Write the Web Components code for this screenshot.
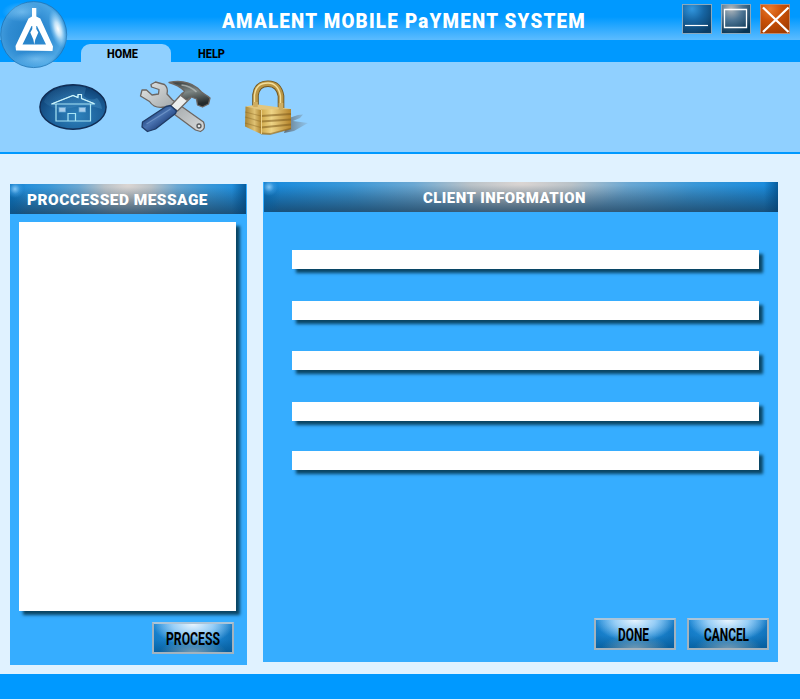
<!DOCTYPE html>
<html lang="en"><head><meta charset="utf-8"><title>Amalent Mobile Payment System</title>
<style>
html,body{margin:0;padding:0}
body{width:800px;height:700px;overflow:hidden;background:#e0f2ff;font-family:Roboto,"Liberation Sans",sans-serif}
</style></head><body>
<payment-app></payment-app>
<script>
const define=(name,html,after)=>{
  const t=document.createElement('template');t.innerHTML=html;
  customElements.define(name,class extends HTMLElement{
    connectedCallback(){
      if(this.shadowRoot)return;
      this.attachShadow({mode:'open'}).append(t.content.cloneNode(true));
      if(after)after(this,this.shadowRoot);
    }
  });
};

/* One line of lettering fitted to an exact width. */
define('fit-text',`<style>:host{display:block;flex:none}svg{display:block;overflow:visible}text{font-family:Roboto,"Liberation Sans",sans-serif}</style><svg><text lengthAdjust="spacingAndGlyphs"></text></svg>`,(h,r)=>{
  const s=r.querySelector('svg'),t=r.querySelector('text'),w=h.getAttribute('w'),c=+h.getAttribute('cap');
  s.setAttribute('width',w);s.setAttribute('height',c);
  t.setAttribute('y',c);t.setAttribute('textLength',w);t.setAttribute('fill',h.getAttribute('color')||'#fff');
  t.style.fontSize=(c/.711)+'px';t.style.fontWeight=h.getAttribute('weight')||'800';
  t.style.letterSpacing=(h.getAttribute('track')||0)+'px';
  t.textContent=h.getAttribute('label');
});

define('app-logo',`<style>:host{display:block;position:absolute;left:0;top:0}svg{display:block}</style>
<svg width="70" height="70" viewBox="0 0 70 70">
<defs><radialGradient id="b" cx=".42" cy=".5" r=".6"><stop offset="0" stop-color="#2380c6"/><stop offset=".5" stop-color="#308cd2"/><stop offset=".85" stop-color="#4ba5e3"/><stop offset="1" stop-color="#2588ce"/></radialGradient>
<radialGradient id="h"><stop offset="0" stop-color="#fff"/><stop offset=".35" stop-color="#e4f5ff" stop-opacity=".8"/><stop offset="1" stop-color="#8fd2ff" stop-opacity="0"/></radialGradient>
<radialGradient id="l"><stop offset="0" stop-color="#8fd0fa" stop-opacity=".6"/><stop offset="1" stop-color="#8fd0fa" stop-opacity="0"/></radialGradient></defs>
<circle cx="33.7" cy="34.6" r="33" fill="url(#b)" stroke="#2074b4" stroke-width=".8"/>
<ellipse cx="22" cy="12" rx="20" ry="10" fill="url(#l)"/>
<ellipse cx="58" cy="29" rx="8" ry="20" fill="url(#h)" transform="rotate(-16 58 29)"/>
<ellipse cx="36" cy="59" rx="22" ry="8" fill="url(#l)"/>
<path fill="#fff" fill-rule="evenodd" d="M32 8h4.300v8.500l4 2L53 46.500 52.500 51 16 50.500 15.500 46 28.500 18.500 32 16.500ZM31.500 26 22.500 44.500H46L37 26Z"/>
<path fill="#fff" d="M32.300 17h4v12l2 3.500-3 7-1 5-1-5-3-7 2-3.500Z"/>
</svg>`);

define('window-button',`<style>:host{display:block;width:30px;height:30px}svg{display:block}</style>
<svg width="30" height="30" viewBox="0 0 30 30"><defs><radialGradient id="g" cx=".33" cy=".15" r=".9"></radialGradient></defs><rect x=".5" y=".5" width="29" height="29" fill="url(#g)"/><g fill="none" stroke="#fff"></g></svg>`,(h,r)=>{
  const k=h.getAttribute('kind');
  const m={
    min:['#3297df','#1766a4','#0a3d66','M3 21.500H26','#8ba9bd',1.2],
    max:['#b2b8bc','#4d7493','#083453','M3.500 5.500H25.500V23.500H3.500Z','#8ba9bd',1.3],
    close:['#e87a2c','#cb5108','#a43d00','M3 3.500 28.500 28M28.500 3.500 3 28','#bb8a70',2.3]}[k];
  r.querySelector('radialGradient').innerHTML=`<stop offset="0" stop-color="${m[0]}"/><stop offset=".45" stop-color="${m[1]}"/><stop offset="1" stop-color="${m[2]}"/>`;
  r.querySelector('rect').setAttribute('stroke',m[4]);
  r.querySelector('g').innerHTML=`<path d="${m[3]}" stroke-width="${m[5]}"/>`;
});

define('title-bar',`<style>:host{display:flex;box-sizing:border-box;height:40px;padding:4px 10px 0 222px;justify-content:space-between;background:linear-gradient(#09f 0,#09f 17px,#31abff 29px,#5cbcff 40px)}
.t{padding-top:10px}.b{display:flex;gap:9px}</style>
<div class="t"><fit-text label="AMALENT MOBILE PaYMENT SYSTEM" w="364" cap="14" track="1.3" weight="900"></fit-text></div>
<div class="b"><window-button kind="min"></window-button><window-button kind="max"></window-button><window-button kind="close"></window-button></div>`);

define('tab-strip',`<style>:host{display:flex;box-sizing:border-box;height:22px;padding:4px 0 0 81px;background:#09f}
div{box-sizing:border-box;height:18px;padding:5px 0 0 26px}div+div{padding-left:27px}.on{width:90px;background:#90d0ff;border-radius:9px 9px 0 0}</style>
<div class="on"><fit-text label="HOME" w="31" cap="9.2" color="#000"></fit-text></div><div><fit-text label="HELP" w="27" cap="9.2" color="#000"></fit-text></div>`);

define('home-icon',`<style>:host{display:block}svg{display:block}</style>
<svg width="68" height="46" viewBox="0 0 68 46"><defs><radialGradient id="a" cx=".55" cy=".7" r=".7"><stop offset="0" stop-color="#2f83bd"/><stop offset=".55" stop-color="#1d629c"/><stop offset="1" stop-color="#0c3c6e"/></radialGradient><linearGradient id="s" x2="1" y2=".4"><stop offset="0" stop-color="#54a0d2" stop-opacity=".2"/><stop offset="1" stop-color="#509dcf" stop-opacity=".75"/></linearGradient></defs>
<ellipse cx="34" cy="23" rx="33.100" ry="22.200" fill="url(#a)" stroke="#112d55" stroke-width="1.400"/>
<path d="M5 18C8 9 17 3.500 28 2.500Q41 1 47 4L45 12Q51 18 58 14 62 18 63 25 46 19 32 24 16 28 5 18Z" fill="url(#s)" opacity=".45"/>
<g fill="none" stroke="#a7e4f5" stroke-width="1.200"><path d="M12.500 20 34 11.500 39 13.500V10.500H42.500V14.500L56 20ZM17 20V37H51.500V20M29 37V29.500H36.500V37"/></g>
<path d="M12.500 20 34 11.500 39 13.500V10.500H42.500V14.500L55 19.500" fill="none" stroke="#d7f6fa" stroke-width=".9"/>
<g fill="#a6cceb" stroke="#66a9d8" stroke-width=".7"><rect x="20" y="23.500" width="6.500" height="4.500"/><rect x="40" y="23.500" width="6.500" height="4.500"/></g></svg>`);

define('tools-icon',`<style>:host{display:block}svg{display:block}</style>
<svg width="74" height="54" viewBox="0 0 74 54"><defs><linearGradient id="w" x2="1" y2="1"><stop stop-color="#e5e7e7"/><stop offset=".5" stop-color="#a5aaac"/><stop offset="1" stop-color="#d9dbdc"/></linearGradient><linearGradient id="k" x2=".3" y2="1"><stop stop-color="#303637"/><stop offset=".5" stop-color="#7e8785"/><stop offset="1" stop-color="#252b2c"/></linearGradient><linearGradient id="b" x1=".2" y1=".2" x2=".8" y2=".8"><stop stop-color="#173b77"/><stop offset=".45" stop-color="#4a73b0"/><stop offset="1" stop-color="#12306c"/></linearGradient></defs>
<g transform="translate(-1.500 0)"><g stroke="#6c6662" stroke-width="1.300" stroke-linejoin="round">
<path fill="url(#w)" d="M13.500 4.500 18 2 27 4.500Q31 8 29.500 14L35 20 66 42Q69 49 63 51.500L58 50 27 27Q17 29 12 21.500L3 16 4.500 10 9 10 14.500 15 21 14 21.500 9.500 14 7Z"/>
<circle cx="61.500" cy="46" r="2" fill="#e5e7e5" stroke="#55585a"/>
<path fill="#eceeed" d="M33 26 45 13 53 18 40 31Z"/>
<path fill="url(#k)" d="M31.500 2.500Q48 -1 60 8L64 12Q68 15 70 16L72.500 18 71 24 65 27 60 25 59 19 54 17 49 20 44 16 47 11Q41 5 31.500 2.500Z"/>
<path fill="url(#b)" stroke="#203b65" d="M28.500 26.500 33 25.500 39 31 38 33.500 18 49 10 51.500 4.500 47 5 42Z"/></g>
<path d="M44 5Q53 6 59 12" stroke="#bcc2c0" stroke-width="1.500" fill="none" opacity=".7"/><path d="m9 44 24-15" stroke="#83a6d5" stroke-width="1.200" opacity=".6"/></g></svg>`);

define('lock-icon',`<style>:host{display:block}svg{display:block}</style>
<svg width="66" height="58" viewBox="0 0 66 58"><defs><linearGradient id="f"><stop stop-color="#d0a94a"/><stop offset=".35" stop-color="#eed486"/><stop offset="1" stop-color="#b5842b"/></linearGradient><linearGradient id="m"><stop stop-color="#a98433"/><stop offset=".6" stop-color="#dfc274"/><stop offset="1" stop-color="#b08630"/></linearGradient><linearGradient id="d"><stop stop-color="#555e65" stop-opacity=".85"/><stop offset="1" stop-color="#7d8d99" stop-opacity=".2"/></linearGradient></defs>
<path d="M45 38 54 35 59 34.500 56 38 49 41 64 43 50 51 40 53Z" fill="url(#d)"/>
<path d="M11.500 28V15Q13 3.700 24 3.700 35 3.700 37 16V31" fill="none" stroke="#6f5520" stroke-width="6.600"/><path d="M11.500 28V15Q13 3.700 24 3.700 35 3.700 37 16V31" fill="none" stroke="#bb9745" stroke-width="4.800"/><path d="M10.500 27V15Q12 3 24 3 34 3 36.500 16V31" fill="none" stroke="#f3df9c" stroke-width="1.400"/>
<path d="M1.500 26.500 14 24.500 47 29 27 33Z" fill="#e3c67c"/><path d="M1.500 26.500 17 30V54L1 46.500Z" fill="url(#m)"/><path d="M17 29.500 47 29V49L26 54.500 17 54Z" fill="url(#f)"/>
<g stroke="#7d5b1e" stroke-width="1.800" opacity=".55" fill="none"><path d="M17 36 47 34M17 41.500 47 39.500M17 47.500 47 44.500M17 53.500 26 54 47 48.500"/></g>
<g stroke="#7d5b1e" stroke-width="1.200" opacity=".35" fill="none"><path d="M1 32 17 36M1 37 17 41.500M1 43 17 47.500"/></g>
<path d="M17.500 30V54" stroke="#ecd18a"/><path d="M11.500 22V27M37 23V30" stroke="#cead60" stroke-width="4.500"/></svg>`);

define('tool-bar',`<style>:host{display:flex;box-sizing:border-box;height:92px;padding:18px 0 0 39px;background:#90d0ff;border-bottom:2px solid #09f}home-icon{padding:4px 32px 0 0}tools-icon{margin-right:31px}</style><home-icon></home-icon><tools-icon></tools-icon><lock-icon></lock-icon>`);

define('glossy-panel',`<style>:host{display:block;box-sizing:border-box;background:#36adff}
header{height:30px;box-sizing:border-box;padding:10px 0 0 var(--tx);margin:0 var(--mr,0px) 0 var(--ml,0px);background:
radial-gradient(circle 9px at 5px 5px,rgba(150,212,255,.85),rgba(90,180,245,.35) 55%,transparent),
linear-gradient(270deg,rgba(0,62,112,.6),transparent 14px),
linear-gradient(90deg,rgba(0,90,155,.45),transparent 16px),
linear-gradient(180deg,transparent 10%,rgba(25,50,72,.3) 50%,rgba(25,50,72,.66)),
radial-gradient(ellipse 50% 300% at 50% 0,#dcd6d3 0,#b9c2c8 20%,rgba(130,176,208,.78) 42%,rgba(80,160,212,.6) 68%,rgba(30,143,222,0) 100%),#168add}
</style><header></header><slot></slot>`,(h,r)=>{
  const f=document.createElement('fit-text');
  for(const [k,v] of [['label',h.getAttribute('heading')],['w',h.getAttribute('tw')],['cap','11'],['track','.5'],['weight','900']])f.setAttribute(k,v);
  r.querySelector('header').append(f);
});

define('shadow-field',`<style>:host{display:block;background:#fff;box-shadow:4px 4px 3px rgba(0,48,68,.82)}</style>`);

define('gel-button',`<style>:host{display:flex;box-sizing:border-box;width:82px;height:32px;border:2px solid #a3b3bf;border-top-color:#abc5d9;padding:8px 0 0 var(--bx);background:
radial-gradient(ellipse 40px 22px at 50% 0,rgba(235,246,255,.98),rgba(190,225,252,.75) 50%,transparent) padding-box,
radial-gradient(ellipse 34px 15px at 50% 105%,rgba(150,175,190,.75),transparent) padding-box,
linear-gradient(90deg,rgba(0,100,176,.4),transparent 25%,transparent 75%,rgba(0,90,160,.5)) padding-box,
linear-gradient(#2b9bea,#1e86d0 55%,#0a609c) padding-box}</style>`,(h,r)=>{
  const f=document.createElement('fit-text');
  for(const [k,v] of [['label',h.getAttribute('label')],['w',h.getAttribute('tw')],['cap','13'],['color','#000'],['weight','700']])f.setAttribute(k,v);
  r.append(f);
});

define('payment-app',`<style>:host{display:flex;flex-direction:column;position:relative;width:800px;height:699px;overflow:hidden}
main{display:flex;align-items:flex-start;gap:16px;height:520px;box-sizing:border-box;padding:28px 0 0 10px}
.l{width:237px;height:481px;margin-top:2px;--tx:17px;--mr:1px}
.r{width:515px;height:480px;--tx:159px;--ml:1px}
.msg{width:217px;height:389px;margin:8px 0 11px 9px}
.l gel-button{margin-left:142px;--bx:12px}
.fields{display:grid;grid-template-rows:51px 50px 51px 49px 19px;padding:38px 19px 0 29px;height:368px;box-sizing:border-box;align-content:start}
.fields shadow-field{height:19px}
.actions{display:flex;gap:11px;justify-content:flex-end;padding:38px 9px 0 0}
.actions gel-button{--bx:22px}.actions gel-button+gel-button{--bx:15px}
footer{height:25px;background:#09f}</style>
<title-bar></title-bar><tab-strip></tab-strip><tool-bar></tool-bar>
<main><glossy-panel class="l" heading="PROCCESSED MESSAGE" tw="181"><shadow-field class="msg"></shadow-field><gel-button label="PROCESS" tw="54"></gel-button></glossy-panel>
<glossy-panel class="r" heading="CLIENT INFORMATION" tw="163"><div class="fields"><shadow-field></shadow-field><shadow-field></shadow-field><shadow-field></shadow-field><shadow-field></shadow-field><shadow-field></shadow-field></div><div class="actions"><gel-button label="DONE" tw="31"></gel-button><gel-button label="CANCEL" tw="45"></gel-button></div></glossy-panel></main>
<footer></footer><app-logo></app-logo>`);
</script></body></html>
